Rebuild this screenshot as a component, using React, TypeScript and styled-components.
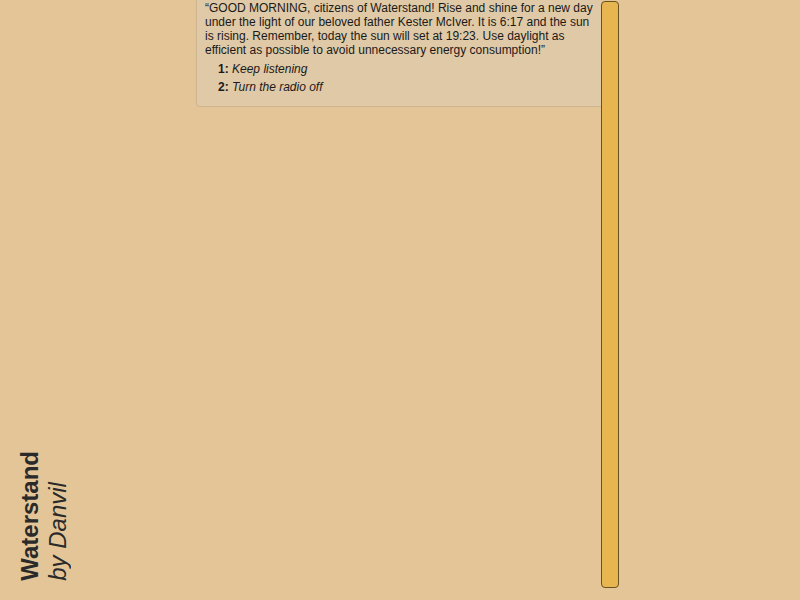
import React from "react";
import styled, { createGlobalStyle } from "styled-components";

const Global = createGlobalStyle`
  html, body { margin: 0; padding: 0; background: #e3c598; }
  body { font-family: "Liberation Sans", Arial, sans-serif; color: #1a1a1a; }
`;

const Page = styled.div`
  display: flex;
  height: 600px;
  width: 800px;
  overflow: hidden;
`;

const Sidebar = styled.div`
  width: 196px;
  display: flex;
  align-items: flex-end;
  padding: 0 0 19px 16px;
  box-sizing: border-box;
`;

const Title = styled.div`
  writing-mode: vertical-rl;
  transform: rotate(180deg);
  font-size: 24px;
  line-height: 28px;
  color: #2a2a2a;
`;

const TitleMain = styled.div`
  font-weight: bold;
`;

const TitleBy = styled.div`
  font-style: italic;
`;

const Main = styled.div`
  width: 405px;
  display: flex;
  flex-direction: column;
`;

const Panel = styled.div`
  background: #e0c9a6;
  border-left: 1px solid #cdb58f;
  border-bottom: 1px solid #cdb58f;
  border-bottom-left-radius: 4px;
  padding: 1px 5px 10px 8px;
  font-size: 12px;
  line-height: 14px;
`;

const Message = styled.p`
  margin: 0;
`;

const Options = styled.ol`
  list-style: none;
  margin: 3px 0 0 0;
  padding: 0 0 0 13px;
`;

const Option = styled.li`
  line-height: 18px;
`;

const Num = styled.b``;

const Choice = styled.i``;

const Bar = styled.div`
  width: 16px;
  height: 585px;
  margin-top: 1px;
  background: #e8b651;
  border: 1px solid #6b5020;
  border-radius: 4px;
`;

export default function App() {
  return (
    <Page>
      <Global />
      <Sidebar>
        <Title>
          <TitleMain>Waterstand</TitleMain>
          <TitleBy>by Danvil</TitleBy>
        </Title>
      </Sidebar>
      <Main>
        <Panel>
          <Message>
            “GOOD MORNING, citizens of Waterstand! Rise and shine for a new day
            under the light of our beloved father Kester McIver. It is 6:17 and
            the sun is rising. Remember, today the sun will set at 19:23. Use
            daylight as efficient as possible to avoid unnecessary energy
            consumption!”
          </Message>
          <Options>
            <Option>
              <Num>1:</Num> <Choice>Keep listening</Choice>
            </Option>
            <Option>
              <Num>2:</Num> <Choice>Turn the radio off</Choice>
            </Option>
          </Options>
        </Panel>
      </Main>
      <Bar />
    </Page>
  );
}
